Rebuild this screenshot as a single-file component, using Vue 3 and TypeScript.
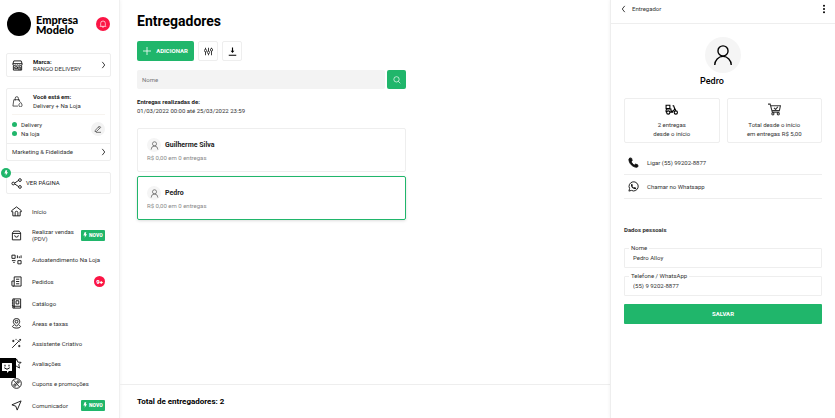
<script setup lang="ts">
import { ref } from 'vue'

interface MenuItem {
  label: string
  icon: string
  tag?: string
  count?: string
  size?: string
}

const menu: MenuItem[] = [
  { label: 'Início', icon: 'home' },
  { label: 'Realizar vendas (PDV)', icon: 'bag', tag: 'NOVO', size: 'double' },
  { label: 'Autoatendimento Na Loja', icon: 'qr' },
  { label: 'Pedidos', icon: 'orders', count: '9+', size: 'tall' },
  { label: 'Catálogo', icon: 'catalog' },
  { label: 'Áreas e taxas', icon: 'area' },
  { label: 'Assistente Criativo', icon: 'wand' },
  { label: 'Avaliações', icon: 'star' },
  { label: 'Cupons e promoções', icon: 'percent' },
  { label: 'Comunicador', icon: 'send', tag: 'NOVO', size: 'tall' },
]

const icons: Record<string, string> = {
  home: 'M1.500 10 12 2 22.500 10V12.500H20V21.500H4V12.500H1.500ZM9 21.500V14.500a3 3 0 0 1 6 0V21.500',
  bag: 'M6 2.500H18L21 6.500V21.500H3V6.500ZM3 7.500H21M8 11.500a4 4 0 0 0 8 0',
  qr: 'M2 2.500H9V9.500H2ZM15 14.500H22V21.500H15ZM14 3V9M18 5V9M22 3V9M2 14.500H10M5 18.500H8',
  orders: 'M7 2H22V22H4a2 2 0 0 1-2-2V11H7M7 2V20a2 2 0 0 1-3 2M11 7H18M11 12H18M11 17H18',
  catalog: 'M4 2H21V22H4ZM7 2V22M4 18H21M11 6H17V13H11ZM2 6H5M2 11H5M2 16H5',
  area: 'M12 18C7 13 5 11 5 8a7 7 0 0 1 14 0C19 11 17 13 12 18ZM12 5a3 3 0 1 1 0 6a3 3 0 0 1 0-6M7 15.500C0 18 4 22 12 22S24 18 17 15.500',
  wand: 'M2.500 21.500 17 7M15 5 19 9M20 2V6M18 4H22M5 4V9M2.500 6.500H7.500M18 15V20M15.500 17.500H20.500M11 2V4',
  star: 'M12 2 15 9 22 9.500 17 14.500 18.500 22 12 18 5.500 22 7 14.500 2 9.500 9 9Z',
  percent: 'M12 1.500a10.500 10.500 0 1 1 0 21a10.500 10.500 0 0 1 0-21M6 5 18 19M15.500 6a2.500 2.500 0 1 1 0 5a2.500 2.500 0 0 1 0-5M8.500 13a2.500 2.500 0 1 1 0 5a2.500 2.500 0 0 1 0-5',
  send: 'M22 2 2 10.500 10.500 13.500 13.500 22Z',
}

const couriers = [
  { name: 'Guilherme Silva', summary: 'R$ 0,00 em 0 entregas' },
  { name: 'Pedro', summary: 'R$ 0,00 em 0 entregas' },
]

const selected = ref('Pedro')
const search = ref('')
const fullName = ref('Pedro Alloy')
const phone = ref('(55) 9 9202-8877')
</script>

<template>
  <div class="app">
    <aside class="sidebar">
      <header class="company">
        <span class="logo"></span>
        <strong class="company-name">Empresa Modelo</strong>
        <button class="bell" type="button" aria-label="Notificações">
          <svg viewBox="0 0 24 24"><path d="M5 17V10a7 7 0 0 1 14 0V17L21 19H3ZM9 19a3 3 0 0 0 6 0" /></svg>
        </button>
      </header>

      <button class="box brand" type="button">
        <svg class="icon" viewBox="0 0 24 24"><path d="M4 2H20L22 8V10a3 3 0 0 1-5 1a3 3 0 0 1-5 0a3 3 0 0 1-5 0A3 3 0 0 1 2 10V8ZM2 8H22M3 12V22H21V12M6 15H12V19H6ZM15 22V15H18V22" /></svg>
        <span class="box-text"><b>Marca:</b><span>RANGO DELIVERY</span></span>
        <svg class="chevron" viewBox="0 0 8 12"><path d="M2 1 6 6 2 11" /></svg>
      </button>

      <section class="box place">
        <div class="place-head">
          <svg class="icon thin" viewBox="0 0 24 24"><path d="M13 22H2L4 8H16L17 13M7 10V5a3.500 3.500 0 0 1 7 0V10M19 14C16 17 15 18 15 20a3.500 3.500 0 0 0 7 0C22 18 21 17 19 14Z" /></svg>
          <span class="box-text"><b>Você está em:</b><span>Delivery + Na Loja</span></span>
        </div>
        <div class="place-status">
          <ul class="status">
            <li>Delivery</li>
            <li>Na loja</li>
          </ul>
          <button class="edit" type="button" aria-label="Editar">
            <svg viewBox="0 0 24 24"><path d="M4 16 16 3 20 7 8 19 3 20ZM13 6 17 10M6 22H21" /></svg>
          </button>
        </div>
        <a class="place-link" href="#">
          <span>Marketing &amp; Fidelidade</span>
          <svg class="chevron" viewBox="0 0 8 12"><path d="M2 1 6 6 2 11" /></svg>
        </a>
      </section>

      <a class="box visit" href="#">
        <span class="bolt"><svg viewBox="0 0 10 14"><path d="M4 0H8L7 5H10L4 14 5 8H1Z" /></svg></span>
        <svg class="icon" viewBox="0 0 24 24"><path d="M8 11 17 5M8 13 17 19M5 9a3 3 0 1 1 0 6a3 3 0 0 1 0-6M19.500 1.500a3 3 0 1 1 0 6a3 3 0 0 1 0-6M19.500 16.500a3 3 0 1 1 0 6a3 3 0 0 1 0-6" /></svg>
        <span>VER PÁGINA</span>
      </a>

      <nav class="menu">
        <a v-for="item in menu" :key="item.label" class="menu-item" :class="item.size" href="#">
          <svg class="icon" viewBox="0 0 24 24"><path :d="icons[item.icon]" /></svg>
          <span class="menu-label">{{ item.label }}</span>
          <span v-if="item.tag" class="tag">
            <svg viewBox="0 0 10 14"><path d="M4 0H8L7 5H10L4 14 5 8H1Z" /></svg>{{ item.tag }}
          </span>
          <span v-if="item.count" class="count">{{ item.count }}</span>
        </a>
      </nav>
    </aside>

    <main class="main">
      <div class="content">
        <h1>Entregadores</h1>
        <div class="toolbar">
          <button class="add" type="button">
            <svg viewBox="0 0 10 10"><path d="M5 0V10M0 5H10" /></svg>ADICIONAR
          </button>
          <button class="tool" type="button" aria-label="Filtros">
            <svg viewBox="0 0 24 24"><path d="M4 2V6M4 13V22M12 2V11M12 18V22M20 2V4M20 11V22M4 6a2.500 3 0 1 1 0 7a2.500 3 0 0 1 0-7M12 11a2.500 3 0 1 1 0 7a2.500 3 0 0 1 0-7M20 4a2.500 3 0 1 1 0 7a2.500 3 0 0 1 0-7" /></svg>
          </button>
          <button class="tool bold" type="button" aria-label="Baixar">
            <svg viewBox="0 0 24 24"><path d="M12 1V13M2 22H22" /><path class="fill" d="M7 10H17L12 16Z" /></svg>
          </button>
        </div>
        <form class="search" @submit.prevent>
          <input v-model="search" type="text" placeholder="Nome" aria-label="Nome" />
          <button type="submit" aria-label="Buscar">
            <svg viewBox="0 0 24 24"><path d="M10.500 2a8 8 0 1 1 0 16a8 8 0 0 1 0-16M16 16 22 22" /></svg>
          </button>
        </form>
        <p class="period"><b>Entregas realizadas de:</b><span>01/03/2022 00:00 até 25/03/2022 23:59</span></p>
        <div class="couriers">
          <button
            v-for="courier in couriers"
            :key="courier.name"
            type="button"
            class="courier"
            :class="{ active: courier.name === selected }"
            @click="selected = courier.name"
          >
            <span class="courier-head">
              <span class="avatar"><svg viewBox="0 0 24 24"><path d="M12 2a5.500 5.500 0 1 1 0 11a5.500 5.500 0 0 1 0-11M3 23a9 9.500 0 0 1 18 0" /></svg></span>
              <b>{{ courier.name }}</b>
            </span>
            <span class="summary">{{ courier.summary }}</span>
          </button>
        </div>
      </div>
      <footer class="total">Total de entregadores: 2</footer>
    </main>

    <aside class="panel">
      <header class="panel-head">
        <button type="button" class="back">
          <svg class="chevron" viewBox="0 0 8 12"><path d="M6 1 2 6 6 11" /></svg>
          <span>Entregador</span>
        </button>
        <button type="button" class="more" aria-label="Mais opções">
          <svg viewBox="0 0 4 12"><circle cx="2" cy="2" r="1.200" /><circle cx="2" cy="6" r="1.200" /><circle cx="2" cy="10" r="1.200" /></svg>
        </button>
      </header>
      <div class="panel-body">
        <div class="profile">
          <span class="avatar large"><svg viewBox="0 0 24 24"><path d="M12 2a5.500 5.500 0 1 1 0 11a5.500 5.500 0 0 1 0-11M3 23a9 9.500 0 0 1 18 0" /></svg></span>
          <h2>Pedro</h2>
        </div>
        <div class="stats">
          <div class="stat">
            <svg class="moto" viewBox="0 0 24 20"><path d="M2 2H9V8H2ZM2 11Q2 9 5 9H11V13H15L18 9 16 3H14M18 8 20 12M9 15H15M2 15V11M6 12.500a3 3 0 1 1 0 6a3 3 0 0 1 0-6M20 12.500a3 3 0 1 1 0 6a3 3 0 0 1 0-6" /></svg>
            <span>2 entregas<br />desde o início</span>
          </div>
          <div class="stat">
            <svg viewBox="0 0 24 24"><path d="M0 2H4L8 17H21M5 5H23L21 14H7M11 9 14 12 18 7M9 18a2 2 0 1 1 0 4a2 2 0 0 1 0-4M19 18a2 2 0 1 1 0 4a2 2 0 0 1 0-4" /></svg>
            <span>Total desde o início<br />em entregas R$ 5,00</span>
          </div>
        </div>
        <div class="contacts">
          <a href="tel:+5555992028877">
            <svg class="icon solid" viewBox="0 0 24 24"><path d="M4 2 8 3 9 8 7 10.500C9 14 11 16 14 17.500L16.500 15.500 21 17 22 20.500 19 22.500C10 22 2 14 2 5Z" /></svg>
            Ligar (55) 99202-8877
          </a>
          <a href="#">
            <svg class="icon" viewBox="0 0 24 24"><path d="M2 22 3.500 16.500a10 10 0 1 1 4 4Z" /><path class="fill glyph" d="M7 7 9 6 10.500 9.500 9.500 11.500C10.500 13 12 14 13 14.500L14.500 13 18 15C17.500 18 16 18 14 17.500C10 16.500 6 12 6.500 8.500Z" /></svg>
            Chamar no Whatsapp
          </a>
        </div>
        <form class="details" @submit.prevent>
          <h3>Dados pessoais</h3>
          <div class="field">
            <label for="full-name">Nome</label>
            <input id="full-name" v-model="fullName" type="text" />
          </div>
          <div class="field">
            <label for="phone">Telefone / WhatsApp</label>
            <input id="phone" v-model="phone" type="tel" />
          </div>
          <button class="save" type="submit">SALVAR</button>
        </form>
      </div>
    </aside>

    <button class="chat" type="button" aria-label="Avaliar">
      <svg viewBox="0 0 24 24">
        <path class="bubble" d="M3 2H21Q22 2 22 3V17Q22 18 21 18H16L12 22V18H3Q2 18 2 17V3Q2 2 3 2Z" />
        <path d="M8 5.500V9M16 5.500V9M6.500 11.500Q12 17.500 17.500 11.500" />
      </svg>
    </button>
  </div>
</template>

<style>
html,
body {
  margin: 0;
  background: #fff;
}
</style>

<style scoped>
.app {
  --green: #20b66b;
  --line: #eee;
  display: grid;
  grid-template-columns: 120px minmax(0, 1fr) 225px;
  min-height: 100vh;
  font: 6px/8px Roboto, sans-serif;
  color: #333;
}
.app *,
.app *::before {
  box-sizing: border-box;
}
button,
input {
  margin: 0;
  padding: 0;
  border: 0;
  background: none;
  font: inherit;
  color: inherit;
  text-align: left;
}
button {
  cursor: pointer;
}
a {
  color: inherit;
  text-decoration: none;
}
b {
  color: #222;
}
h1,
h2,
h3,
p,
ul {
  margin: 0;
  padding: 0;
}
svg {
  flex: none;
  display: block;
  fill: none;
  stroke: currentColor;
  stroke-width: 2;
}
.icon {
  width: 11px;
  height: 11px;
  color: #111;
}
.thin {
  stroke-width: 1.500;
}
.solid,
.fill {
  fill: currentColor;
}
.glyph {
  stroke: none;
}
.chevron {
  width: 5px;
  height: 8px;
  stroke-width: 1.500;
}

.sidebar {
  border-right: 1px solid #f0f0f0;
  box-shadow: 0 0 4px #0001;
}
.company {
  display: flex;
  align-items: center;
  gap: 5px;
  padding: 12px 9px 0 7px;
}
.logo {
  width: 24px;
  height: 24px;
  border-radius: 50%;
  background: #000;
}
.company-name {
  flex: 1;
  padding-top: 2px;
  font: 900 11px/10px Lato, sans-serif;
  color: #000;
}
.bell {
  display: grid;
  place-items: center;
  width: 14px;
  height: 14px;
  border-radius: 50%;
  background: #fb1545;
  color: #fff;
}
.bell svg {
  width: 8px;
  height: 8px;
}
.box {
  margin: 0 8px 0 6px;
  border: 1px solid var(--line);
  border-radius: 2px;
}
.brand {
  display: flex;
  align-items: center;
  width: 105px;
  height: 24px;
  margin-top: 17px;
  padding: 0 4px 0 5px;
}
.box-text {
  flex: 1;
  display: grid;
  padding: 0 0 1px 10px;
  line-height: 7px;
}
.place {
  margin-top: 11px;
}
.place-head {
  display: flex;
  align-items: center;
  height: 26px;
  margin: 0 5px;
  border-bottom: 1px solid #f7f4f0;
}
.place-head .box-text {
  line-height: 9px;
}
.place-status {
  display: flex;
  align-items: center;
  justify-content: space-between;
  height: 29px;
  padding: 0 5px;
  border-bottom: 1px solid var(--line);
}
.status {
  list-style: none;
}
.status li {
  display: flex;
  align-items: center;
  gap: 4px;
  height: 9px;
}
.status li::before {
  content: '';
  width: 5px;
  height: 5px;
  border-radius: 50%;
  background: var(--green);
}
.edit {
  display: grid;
  place-items: center;
  width: 14px;
  height: 14px;
  border-radius: 50%;
  background: #f3f3f3;
}
.edit svg {
  width: 8px;
  height: 8px;
}
.place-link {
  display: flex;
  align-items: center;
  justify-content: space-between;
  height: 16px;
  padding: 0 4px 0 5px;
}
.visit {
  position: relative;
  display: flex;
  align-items: center;
  gap: 4px;
  height: 22px;
  margin-top: 11px;
  padding-left: 4px;
  color: #222;
}
.bolt {
  position: absolute;
  top: -5px;
  left: -6px;
  display: grid;
  place-items: center;
  width: 10px;
  height: 10px;
  border-radius: 50%;
  background: var(--green);
  color: #fff;
}
.bolt svg,
.tag svg {
  width: 4px;
  height: 6px;
  fill: currentColor;
  stroke: none;
}
.menu {
  padding-top: 7px;
}
.menu-item {
  display: flex;
  align-items: center;
  gap: 10px;
  height: 20px;
  padding: 0 14px 0 11px;
  line-height: 7px;
}
.menu-item.double {
  height: 28px;
}
.menu-item.tall {
  height: 24px;
}
.menu-label {
  flex: 1;
}
.tag {
  display: flex;
  align-items: center;
  gap: 2px;
  width: 24px;
  height: 11px;
  margin-left: -10px;
  padding: 0 2px;
  border-radius: 1px;
  background: var(--green);
  color: #fff;
  font-size: 5px;
  font-weight: 900;
}
.count {
  width: 11px;
  height: 11px;
  border-radius: 50%;
  background: #fb1545;
  color: #fff;
  font-size: 6px;
  font-weight: 900;
  line-height: 11px;
  text-align: center;
}

.main {
  display: flex;
  flex-direction: column;
}
.content {
  flex: 1;
  width: 286px;
  padding: 13px 0 0 17px;
}
h1 {
  font-size: 14px;
  line-height: 16px;
  color: #000;
}
.toolbar {
  display: flex;
  gap: 4px;
  margin-top: 12px;
}
.toolbar button {
  display: flex;
  align-items: center;
  justify-content: center;
  height: 20px;
  border-radius: 2px;
}
.toolbar .add {
  gap: 5px;
  width: 57px;
  background: var(--green);
  color: #fff;
  font-weight: 700;
}
.add svg {
  width: 8px;
  height: 8px;
  stroke-width: 1;
}
.toolbar .tool {
  width: 20px;
  border: 1px solid var(--line);
  color: #000;
}
.tool svg {
  width: 9px;
  height: 9px;
}
.bold svg {
  stroke-width: 3;
}
.bold .fill {
  stroke: none;
}
.search {
  display: flex;
  gap: 2px;
  margin-top: 9px;
}
.search input {
  flex: 1;
  min-width: 0;
  height: 19px;
  padding: 0 5px;
  border-radius: 2px;
  background: #f3f3f3;
}
.search input::placeholder {
  color: #777;
}
.search button {
  display: grid;
  place-items: center;
  width: 19px;
  height: 19px;
  border-radius: 2px;
  background: var(--green);
  color: #fff;
}
.search svg {
  width: 8px;
  height: 8px;
}
.period {
  display: grid;
  margin-top: 8px;
  line-height: 9px;
}
.couriers {
  display: grid;
  gap: 4px;
  margin-top: 13px;
}
.courier {
  display: grid;
  align-content: center;
  gap: 2px;
  height: 44px;
  padding: 0 9px;
  border: 1px solid var(--line);
  border-radius: 2px;
}
.courier.active {
  border-color: var(--green);
  box-shadow: 0 1px 3px #0002;
}
.courier-head {
  display: flex;
  align-items: center;
  gap: 4px;
  font-size: 7px;
}
.summary {
  color: #888;
}
.avatar {
  display: grid;
  place-items: center;
  width: 14px;
  height: 14px;
  border-radius: 50%;
  background: #f5f5f5;
}
.avatar svg {
  width: 9px;
  height: 9px;
  stroke-width: 1.500;
}
.total {
  height: 34px;
  padding-left: 17px;
  border-top: 1px solid var(--line);
  color: #000;
  font-size: 8px;
  font-weight: 700;
  line-height: 34px;
}

.panel {
  border-left: 1px solid var(--line);
  box-shadow: 0 0 4px #0001;
}
.panel-head {
  display: flex;
  align-items: center;
  justify-content: space-between;
  height: 24px;
  padding: 0 9px 5px 10px;
  border-bottom: 1px solid var(--line);
}
.back {
  display: flex;
  align-items: center;
  gap: 6px;
}
.more svg {
  width: 4px;
  height: 10px;
  fill: #000;
  stroke: none;
}
.panel-body {
  padding: 13px 13px 0;
}
.profile {
  display: grid;
  justify-items: center;
}
.avatar.large {
  width: 36px;
  height: 36px;
  color: #000;
}
.large svg {
  width: 22px;
  height: 22px;
}
h2 {
  margin-right: 22px;
  font-size: 9px;
  line-height: 16px;
  font-weight: 500;
  color: #000;
}
.stats {
  display: grid;
  grid-template-columns: 1fr 1fr;
  gap: 7px;
  margin-top: 9px;
}
.stat {
  display: grid;
  align-content: start;
  justify-items: center;
  gap: 4px;
  height: 45px;
  padding-top: 4px;
  border: 1px solid var(--line);
  border-radius: 2px;
  line-height: 9px;
  text-align: center;
}
.stat svg {
  width: 13px;
  height: 13px;
}
.moto {
  color: #000;
}
.contacts {
  display: grid;
  margin-top: 8px;
}
.contacts a {
  display: flex;
  align-items: center;
  gap: 8px;
  height: 24px;
  padding-left: 4px;
  border-bottom: 1px solid var(--line);
}
h3 {
  margin-top: 26px;
  font-size: 6px;
  line-height: 10px;
}
.details {
  display: grid;
}
.field {
  position: relative;
  margin-top: 8px;
}
h3 + .field {
  margin-top: 13px;
}
.field label {
  position: absolute;
  top: -4px;
  left: 5px;
  padding: 0 2px;
  background: #fff;
}
.field input {
  display: block;
  width: 100%;
  height: 20px;
  padding: 0 8px 1px;
  border: 1px solid var(--line);
  border-radius: 1px;
}
.save {
  height: 20px;
  margin-top: 8px;
  border-radius: 1px;
  background: var(--green);
  color: #fff;
  font-weight: 700;
  text-align: center;
}

.chat {
  position: fixed;
  bottom: 40px;
  left: 0;
  display: grid;
  place-items: center;
  width: 16px;
  height: 20px;
  padding-right: 3px;
  background: #000;
}
.chat svg {
  width: 12px;
  height: 12px;
  stroke: #000;
}
.chat .bubble {
  fill: #fff;
  stroke: none;
}
</style>
